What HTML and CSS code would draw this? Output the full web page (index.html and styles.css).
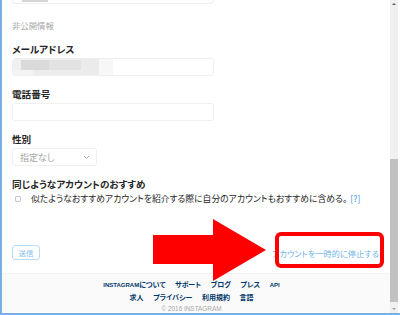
FILE: index.html
```html
<!DOCTYPE html>
<html lang="ja">
<head>
  <meta charset="UTF-8">
  <meta name="viewport" content="width=device-width, initial-scale=1.0">
  <title>プロフィールを編集 - Instagram</title>
  <link rel="stylesheet" href="styles.css">
</head>
<body>
  <div class="window">
    <div class="main">
      <form class="form">
        <div class="input partial"><span class="blur-top"></span></div>

        <p class="section">非公開情報</p>

        <p class="label">メールアドレス</p>
        <div class="input">
          <svg class="mosaic" width="100" height="16" viewBox="0 0 100 16">
            <rect x="0" y="0" width="100" height="16" fill="#f7f7f7"/>
            <rect x="0" y="0" width="86" height="16" fill="#f0f0f0"/>
            <rect x="8" y="1" width="60" height="10" fill="#dadada"/>
            <rect x="36" y="1" width="32" height="10" fill="#e2e2e2"/>
            <rect x="68" y="0" width="18" height="16" fill="#ebebeb"/>
            <rect x="0" y="11" width="20" height="5" fill="#f3f3f3"/>
            <rect x="20" y="11" width="48" height="5" fill="#ececec"/>
          </svg>
        </div>

        <p class="label">電話番号</p>
        <div class="input"></div>

        <p class="label">性別</p>
        <div class="select">
          <span>指定なし</span>
          <svg width="7" height="5" viewBox="0 0 7 5"><path d="M1 1l2.5 2.5L6 1" fill="none" stroke="#aaa" stroke-width="1"/></svg>
        </div>

        <p class="label">同じようなアカウントのおすすめ</p>
        <label class="check">
          <span class="box"></span>
          似たようなおすすめアカウントを紹介する際に自分のアカウントもおすすめに含める。
          <a class="help" href="#">[?]</a>
        </label>

        <div class="actions">
          <button type="button" class="submit">送信</button>
          <a class="disable" href="#">アカウントを一時的に停止する</a>
        </div>
      </form>

      <div class="footer">
        <p class="links">
          <a href="#"><span class="en">INSTAGRAM</span>について</a>
          <a href="#">サポート</a>
          <a href="#">ブログ</a>
          <a href="#">プレス</a>
          <a href="#"><span class="en">API</span></a>
        </p>
        <p class="links">
          <a href="#">求人</a>
          <a href="#">プライバシー</a>
          <a href="#">利用規約</a>
          <a href="#">言語</a>
        </p>
        <p class="copy">© 2016 INSTAGRAM</p>
      </div>
    </div>

    <div class="scrollbar">
      <span class="arrow up"></span>
      <span class="track"><span class="thumb"></span></span>
      <span class="arrow down"></span>
    </div>
  </div>

  <svg class="callout" width="240" height="70" viewBox="150 216 240 70">
    <polygon points="153,235 213,235 213,219 266,250 213,281 213,264 153,264" fill="#ff0000"/>
    <rect x="277" y="234" width="105" height="32" rx="4" fill="none" stroke="#ff0000" stroke-width="4"/>
  </svg>
</body>
</html>
```

FILE: styles.css
```css
body { margin: 0; font-family: "Noto Sans CJK JP", "Liberation Sans", sans-serif; color: #262626; font-feature-settings: "palt"; }
p { margin: 0; }
a { text-decoration: none; }

.window { position: relative; width: 400px; height: 315px; box-sizing: border-box; border-left: 2px solid #7aafe3; border-bottom: 2px solid #7aafe3; display: flex; overflow: hidden; }
.main { flex: 1; display: flex; flex-direction: column; background: #fff; }
.form { flex: 1; padding: 0 10px; }

.input { width: 202px; height: 18px; box-sizing: border-box; border: 1px solid #efefef; border-radius: 3px; background: #fff; display: flex; }
.input.partial { height: 4px; border-top: none; border-radius: 0 0 3px 3px; }
.blur-top { width: 26px; height: 2px; margin-left: 9px; background: #d6d6d6; }
.mosaic { display: block; }

.section { margin-top: 15px; font-size: 8.4px; line-height: 12px; color: #a8a8a8; }
.label { font-size: 9.6px; line-height: 12px; font-weight: bold; margin-top: 12px; margin-bottom: 3px; }

.select { width: 85px; height: 18px; box-sizing: border-box; border: 1px solid #efefef; border-radius: 3px; display: flex; align-items: center; justify-content: space-between; padding: 0 6px 0 7px; font-size: 9px; color: #a3a3a3; }
.select svg { display: block; }

.check { display: flex; align-items: center; margin-top: 3px; font-size: 8.8px; line-height: 12px; }
.box { width: 4px; height: 4px; border: 1px solid #c8c8c8; border-radius: 1px; margin: 0 10px 0 3px; }
.help { color: #3f97e6; margin-left: 3px; }

.actions { display: flex; justify-content: space-between; align-items: center; margin-top: 40px; padding-right: 1px; }
.submit { width: 28px; height: 15px; padding: 0; border: 1px solid #b9dbf4; border-radius: 3px; background: #fff; color: #7dbcea; font-family: inherit; font-size: 7.4px; }
.disable { color: #6fb4e8; font-size: 8.2px; }

.footer { height: 40px; background: #fafafa; border-top: 1px solid #f3f3f3; padding: 4px 9px 0 0; box-sizing: border-box; text-align: center; }
.links { font-size: 7px; line-height: 12px; font-weight: bold; }
.links a { color: #003569; margin: 0 4px; }
.en { font-family: "Liberation Sans", sans-serif; font-size: 6px; }
.copy { font-family: "Liberation Sans", sans-serif; font-size: 6.4px; line-height: 11px; color: #a8a8a8; }

.scrollbar { width: 8px; margin-right: 2px; background: #f0f0f0; display: flex; flex-direction: column; }
.arrow { height: 8px; display: flex; align-items: center; justify-content: center; }
.arrow::before { content: ""; border-left: 2px solid transparent; border-right: 2px solid transparent; }
.arrow.up::before { border-bottom: 2px solid #606060; }
.arrow.down::before { border-top: 2px solid #a0a0a0; }
.track { flex: 1; display: flex; flex-direction: column; justify-content: flex-end; padding-bottom: 3px; }
.thumb { height: 143px; background: #c1c1c1; }

.callout { position: absolute; left: 150px; top: 216px; }
```
